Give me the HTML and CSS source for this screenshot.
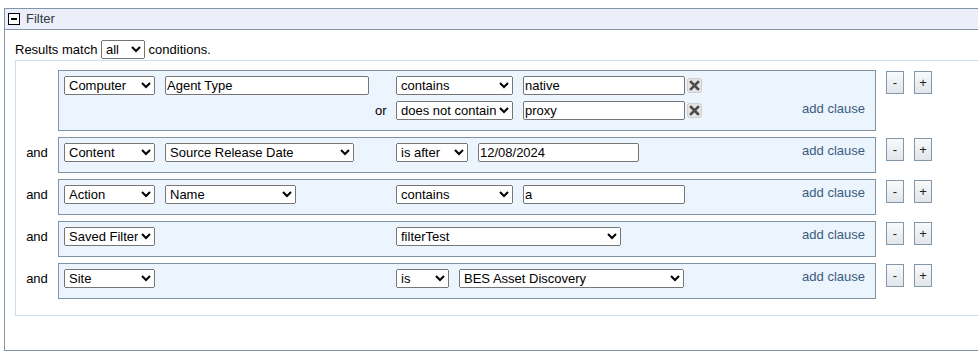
FILE: index.html
```html
<!DOCTYPE html>
<html>
<head>
    <title>Filter</title>
    <link rel="stylesheet" href="styles.css">
</head>
<body>
    <div class="filter-panel">
        <div class="filter-header">
            <span class="toggle"><span class="toggle-bar"></span></span>
            <span class="filter-title">Filter</span>
        </div>
        <div class="filter-body">
            <div class="match-line">Results match <select class="match-select"><option>all</option><option>any</option></select> conditions.</div>

            <div class="clause-list">
                <!-- Row 1 -->
                <div class="clause-row">
                    <div class="conj"></div>
                    <div class="clause-box">
                        <div class="clause-lines">
                            <div class="clause-line">
                                <div class="slot-type"><select class="sel-type"><option>Computer</option></select></div>
                                <div class="slot-prop"><input type="text" class="txt-prop" value="Agent Type"></div>
                                <div class="slot-or"></div>
                                <select class="sel-op w-op"><option>contains</option></select>
                                <input type="text" class="txt-value" value="native">
                                <button class="remove-btn" title="remove">
                                    <svg width="15" height="15" viewBox="0 0 15 15"><rect x="0.5" y="0.5" width="14" height="14" rx="2" fill="#e4e4e4" stroke="#cfcfcf"/><path d="M4 4 L11 11 M11 4 L4 11" stroke="#4b4b4b" stroke-width="2.6" stroke-linecap="square"/></svg>
                                </button>
                            </div>
                            <div class="clause-line">
                                <div class="slot-type"></div>
                                <div class="slot-prop"></div>
                                <div class="slot-or">or</div>
                                <select class="sel-op w-op"><option>does not contain</option></select>
                                <input type="text" class="txt-value" value="proxy">
                                <button class="remove-btn" title="remove">
                                    <svg width="15" height="15" viewBox="0 0 15 15"><rect x="0.5" y="0.5" width="14" height="14" rx="2" fill="#e4e4e4" stroke="#cfcfcf"/><path d="M4 4 L11 11 M11 4 L4 11" stroke="#4b4b4b" stroke-width="2.6" stroke-linecap="square"/></svg>
                                </button>
                            </div>
                        </div>
                        <a class="add-clause">add clause</a>
                    </div>
                    <div class="row-buttons">
                        <button class="row-btn">-</button>
                        <button class="row-btn">+</button>
                    </div>
                </div>

                <!-- Row 2 -->
                <div class="clause-row">
                    <div class="conj">and</div>
                    <div class="clause-box">
                        <div class="clause-lines">
                            <div class="clause-line">
                                <div class="slot-type"><select class="sel-type"><option>Content</option></select></div>
                                <div class="slot-prop"><select class="sel-prop w-date-prop"><option>Source Release Date</option></select></div>
                                <div class="slot-or"></div>
                                <select class="sel-op w-after"><option>is after</option></select>
                                <input type="text" class="txt-value w-date" value="12/08/2024">
                            </div>
                        </div>
                        <a class="add-clause">add clause</a>
                    </div>
                    <div class="row-buttons">
                        <button class="row-btn">-</button>
                        <button class="row-btn">+</button>
                    </div>
                </div>

                <!-- Row 3 -->
                <div class="clause-row">
                    <div class="conj">and</div>
                    <div class="clause-box">
                        <div class="clause-lines">
                            <div class="clause-line">
                                <div class="slot-type"><select class="sel-type"><option>Action</option></select></div>
                                <div class="slot-prop"><select class="sel-prop w-name"><option>Name</option></select></div>
                                <div class="slot-or"></div>
                                <select class="sel-op w-op"><option>contains</option></select>
                                <input type="text" class="txt-value" value="a">
                            </div>
                        </div>
                        <a class="add-clause">add clause</a>
                    </div>
                    <div class="row-buttons">
                        <button class="row-btn">-</button>
                        <button class="row-btn">+</button>
                    </div>
                </div>

                <!-- Row 4 -->
                <div class="clause-row">
                    <div class="conj">and</div>
                    <div class="clause-box">
                        <div class="clause-lines">
                            <div class="clause-line">
                                <div class="slot-type"><select class="sel-type"><option>Saved Filter</option></select></div>
                                <div class="slot-prop"></div>
                                <div class="slot-or"></div>
                                <select class="sel-op w-wide"><option>filterTest</option></select>
                            </div>
                        </div>
                        <a class="add-clause">add clause</a>
                    </div>
                    <div class="row-buttons">
                        <button class="row-btn">-</button>
                        <button class="row-btn">+</button>
                    </div>
                </div>

                <!-- Row 5 -->
                <div class="clause-row">
                    <div class="conj">and</div>
                    <div class="clause-box">
                        <div class="clause-lines">
                            <div class="clause-line">
                                <div class="slot-type"><select class="sel-type"><option>Site</option></select></div>
                                <div class="slot-prop"></div>
                                <div class="slot-or"></div>
                                <select class="sel-op w-is"><option>is</option></select>
                                <select class="sel-value w-wide"><option>BES Asset Discovery</option></select>
                            </div>
                        </div>
                        <a class="add-clause">add clause</a>
                    </div>
                    <div class="row-buttons">
                        <button class="row-btn">-</button>
                        <button class="row-btn">+</button>
                    </div>
                </div>
            </div>
        </div>
    </div>
</body>
</html>
```

FILE: styles.css
```css
html, body {
    overflow: hidden;
}
body {
    margin: 0;
    font-family: "Liberation Sans", Arial, sans-serif;
    font-size: 13px;
    color: #000;
    background: #fff;
}
select, input, button {
    font-family: "Liberation Sans", Arial, sans-serif;
    font-size: 13px;
}

/* Outer panel */
.filter-panel {
    margin: 8px 0 0 4px;
    width: 1100px;
    border: 1px solid #8196a9;
}
.filter-header {
    display: flex;
    align-items: center;
    height: 20px;
    background-color: #eceef9;
    border-bottom: 1px solid #8196a9;
    padding-left: 3px;
}
.toggle {
    display: flex;
    align-items: center;
    justify-content: center;
    box-sizing: border-box;
    width: 12px;
    height: 12px;
    border: 1.5px solid #000;
    background: #fff;
    margin-top: -1px;
}
.toggle-bar {
    width: 6px;
    height: 2px;
    background: #000;
}
.filter-title {
    margin-left: 6px;
    color: #2e3844;
    margin-top: -2px;
}
.filter-body {
    padding: 10px 0 34px 10px;
}
.match-line {
    height: 20px;
    line-height: 19px;
}
.match-select {
    width: 44px;
    height: 19px;
    vertical-align: top;
}

/* Clause container */
.clause-list {
    display: flex;
    flex-direction: column;
    gap: 6px;
    border: 1px solid #c8e0f1;
    padding: 9px 0 16px 0;
}
.clause-row {
    display: flex;
    align-items: flex-start;
}
.conj {
    width: 42px;
    text-align: center;
    padding-top: 6px;
    line-height: 19px;
}
.clause-box {
    box-sizing: border-box;
    width: 818px;
    display: flex;
    align-items: flex-end;
    justify-content: space-between;
    background-color: #ecf4fe;
    border: 1px solid #8093a5;
    padding: 5px 10px 10px 5px;
}
.clause-lines {
    display: flex;
    flex-direction: column;
    gap: 6px;
}
.clause-line {
    display: flex;
    align-items: center;
    height: 19px;
}
.slot-type {
    width: 101px;
    height: 19px;
}
.slot-prop {
    width: 210px;
    height: 19px;
}
.slot-or {
    width: 21px;
    line-height: 19px;
}

select {
    box-sizing: border-box;
    height: 19px;
    margin: 0;
    color: #000;
}
.sel-type { width: 91px; }
.w-date-prop { width: 189px; }
.w-name { width: 131px; }
.w-op { width: 117px; }
.w-after { width: 72px; }
.w-is { width: 53px; }
.w-wide { width: 225px; }
.sel-value { margin-left: 10px; }

input[type="text"] {
    box-sizing: border-box;
    height: 19px;
    border: 1px solid #767676;
    border-radius: 2px;
    padding: 0 1px;
    margin: 0;
    color: #000;
    background: #fff;
}
.txt-prop { width: 204px; }
.txt-value {
    width: 162px;
    margin-left: 10px !important;
}
.w-date { width: 161px; }

.remove-btn {
    border: none;
    background: none;
    padding: 0;
    margin-left: 2px;
    width: 15px;
    height: 15px;
    display: flex;
    cursor: pointer;
}

.add-clause {
    color: #3a5c7e;
    line-height: 15px;
    margin-bottom: 4px;
    cursor: pointer;
}

.row-buttons {
    display: flex;
    gap: 10px;
    margin-left: 10px;
    margin-top: 1px;
}
.row-btn {
    box-sizing: border-box;
    width: 18px;
    height: 23px;
    padding: 0;
    border: 1px solid #8397aa;
    border-radius: 0;
    background: linear-gradient(#fafafa, #e2e5ea);
    color: #222;
    line-height: 18px;
    cursor: pointer;
}
```
